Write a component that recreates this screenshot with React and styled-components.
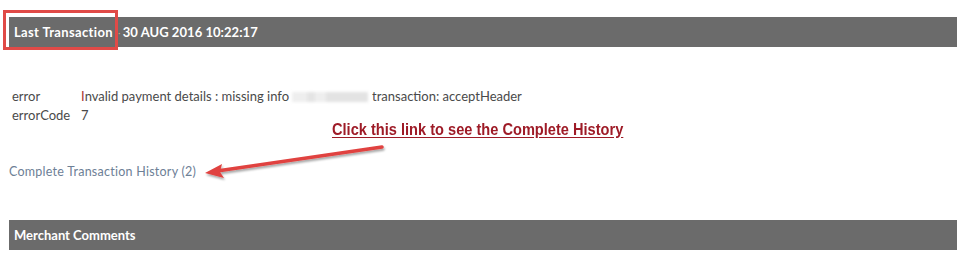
import React from "react";
import styled, { createGlobalStyle } from "styled-components";

const Global = createGlobalStyle`
  html, body { margin: 0; padding: 0; background: #fff; }
  body { font-family: Lato, "Open Sans", sans-serif; width: 968px; height: 268px; overflow: hidden; }
`;

const Page = styled.div`
  position: relative;
  padding: 17px 11px 0 9px;
  height: 268px;
  box-sizing: border-box;
`;

const SectionBar = styled.div`
  height: 30px;
  background: #6b6b6b;
  display: flex;
  align-items: center;
  padding-left: 5px;
  color: #fff;
  font-weight: 700;
  font-size: 13px;
  letter-spacing: ${(p) => (p.$tight ? 0 : 0.35)}px;
  position: relative;
  margin-top: ${(p) => p.$top || 0}px;
`;

const Highlight = styled.span`
  position: absolute;
  left: -6px;
  top: -7px;
  width: 115px;
  height: 40px;
  border: 3px solid #e04a47;
  box-sizing: border-box;
`;

const Sep = styled.span`
  color: #c9a37a;
  margin: 0 2px 0 5px;
  font-weight: 400;
  font-size: 9px;
`;

const DateText = styled.span`
  font-size: 13px;
  letter-spacing: 0.05px;
`;

const Details = styled.div`
  margin-top: 40px;
  display: grid;
  grid-template-columns: 69px auto;
  padding-left: 3px;
  font-size: 13px;
  color: #4a4a4a;
  line-height: 19px;
`;

const Key = styled.span``;
const Val = styled.span`
  display: flex;
  align-items: center;
  white-space: pre;
`;

const Accent = styled.span`
  color: #a33;
`;

const Blur = styled.span`
  display: inline-block;
  width: 76px;
  height: 10px;
  margin: 0 4px 0 3px;
  background: linear-gradient(90deg, #eee 0 20%, #e4e4e4 20% 30%, #eee 30% 45%, #e3e3e3 45% 100%);
  filter: blur(1.5px);
`;

const HistoryLink = styled.a`
  display: block;
  margin-top: 39px;
  font-size: 12.5px;
  color: #6d8096;
  text-decoration: none;
  line-height: 16px;
  letter-spacing: 0.25px;
`;

const Note = styled.div`
  position: absolute;
  left: 332px;
  top: 120px;
  font-family: "Liberation Sans Narrow", "Liberation Sans", Arial, sans-serif;
  font-weight: 700;
  font-size: 16.5px;
  color: #9e1b27;
  text-decoration: underline;
  text-underline-offset: 2px;
  white-space: nowrap;
  transform: scaleX(0.885);
  transform-origin: left center;
`;

const Arrow = styled.svg`
  position: absolute;
  left: 195px;
  top: 138px;
  overflow: visible;
`;

export default function App() {
  return (
    <>
      <Global />
      <Page>
        <SectionBar>
          <Highlight />
          Last Transaction
          <Sep>·</Sep>
          <DateText>30 AUG 2016 10:22:17</DateText>
        </SectionBar>
        <Details>
          <Key>error</Key>
          <Val>
            <Accent>I</Accent>nvalid payment details : missing info
            <Blur />
            transaction: acceptHeader
          </Val>
          <Key>errorCode</Key>
          <Val>7</Val>
        </Details>
        <HistoryLink href="#">Complete Transaction History (2)</HistoryLink>
        <SectionBar $top={40} $tight>Merchant Comments</SectionBar>
        <Note>Click this link to see the Complete History</Note>
        <Arrow width="200" height="50" viewBox="0 0 200 50">
          <defs>
            <filter id="sh" x="-10%" y="-50%" width="120%" height="200%">
              <feDropShadow dx="1" dy="2" stdDeviation="1.2" floodColor="#000" floodOpacity="0.35" />
            </filter>
          </defs>
          <g filter="url(#sh)">
            <line x1="187" y1="9" x2="22" y2="33" stroke="#e0423f" strokeWidth="3.5" strokeLinecap="round" />
            <path d="M10 35 L27 26 L25 34 L29 40 Z" fill="#e0423f" />
          </g>
        </Arrow>
      </Page>
    </>
  );
}
